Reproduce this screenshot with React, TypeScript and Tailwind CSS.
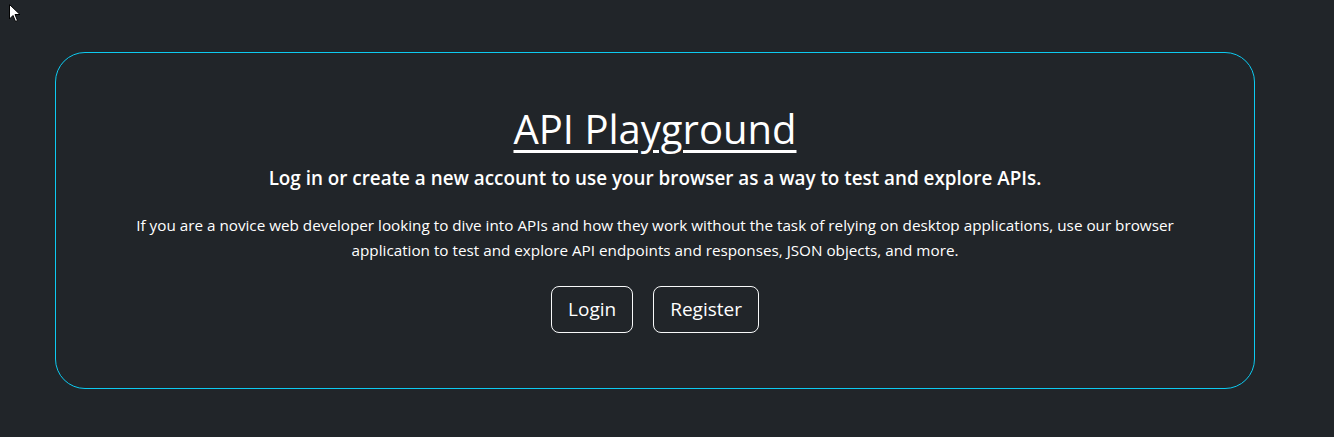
export default function App() {
  return (
    <div
      className="relative min-h-[437px] w-full bg-[#212529] text-white pt-[52px]"
      style={{ fontFamily: '"Open Sans", "Noto Sans", sans-serif' }}
    >
      {/* mouse pointer left in the screenshot */}
      <svg className="absolute left-[9px] top-[4px]" width="12" height="19" viewBox="0 0 12 19">
        <path d="M0.5 0.5 L0.5 15 L4 11.5 L6.5 17.5 L8.5 16.5 L6 10.5 L11 10.5 Z" fill="#fff" stroke="#000" strokeWidth="1" />
      </svg>

      <div className="ml-[55px] w-[1200px] h-[337px] rounded-[30px] border border-[#0dcaf0] flex flex-col items-center pt-[52px]">
        <h1 className="text-[40px] leading-[48px] font-normal underline underline-offset-[6px] decoration-[3px]">API Playground</h1>
        <h5 className="mt-[13px] text-[18.85px] leading-[24px] font-semibold">
          Log in or create a new account to use your browser as a way to test and explore APIs.
        </h5>
        <p className="mt-[23px] w-[1060px] text-center text-[15.25px] leading-[25px]">
          If you are a novice web developer looking to dive into APIs and how they work without the task of relying on desktop applications, use our browser
          application to test and explore API endpoints and responses, JSON objects, and more.
        </p>
        <div className="mt-[23px] flex gap-[20px]">
          <button className="h-[47px] px-4 rounded-lg border border-[#f8f9fa] text-[19px]">Login</button>
          <button className="h-[47px] px-4 rounded-lg border border-[#f8f9fa] text-[19px]">Register</button>
        </div>
      </div>
    </div>
  )
}
